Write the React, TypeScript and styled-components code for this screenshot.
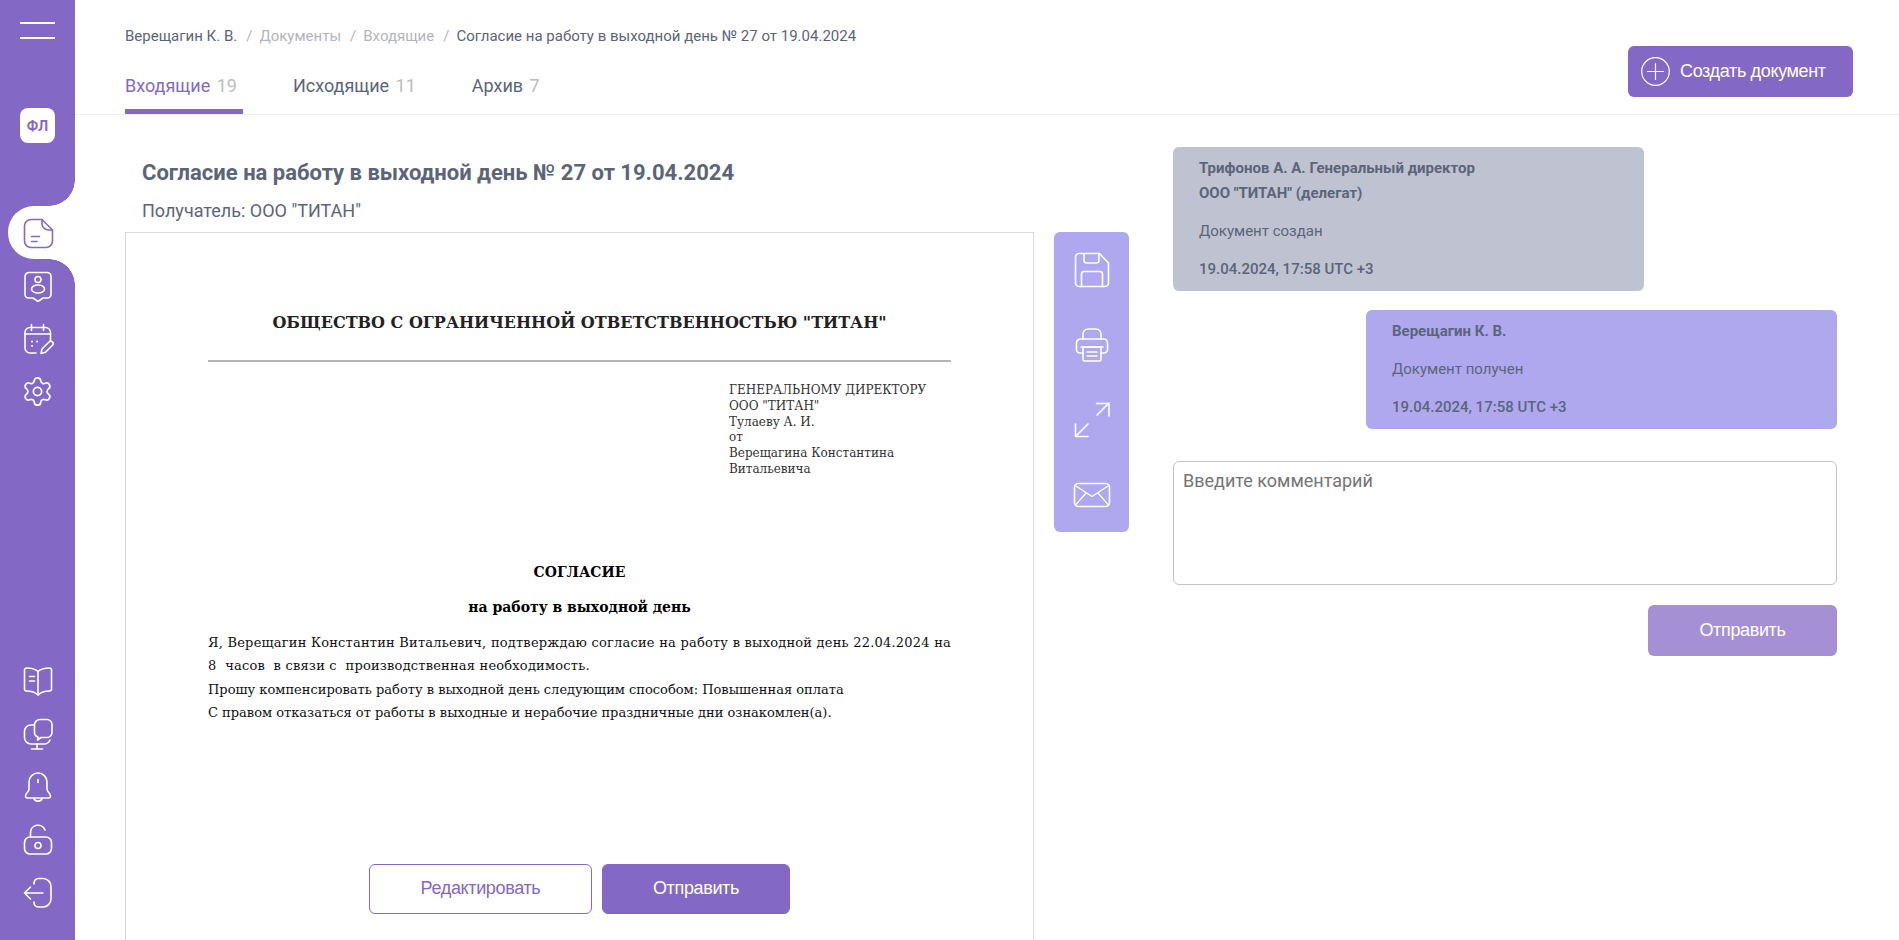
import React from "react";
import styled, { createGlobalStyle } from "styled-components";
import { Settings } from "lucide-react";

const PURPLE = "#8468c6";
const LILAC = "#b0a8ee";
const SLATE = "#5b6579";

const GlobalStyle = createGlobalStyle`
  html, body {
    margin: 0;
    padding: 0;
    height: 100%;
    background: #fff;
    overflow: hidden;
  }
  * {
    box-sizing: border-box;
  }
`;

const Glyph = ({ size = 32, color = "#fff", width = 1.6, children }: any) => (
  <svg
    width={size}
    height={size}
    viewBox={`0 0 ${size} ${size}`}
    fill="none"
    stroke={color}
    strokeWidth={width}
    strokeLinecap="round"
    strokeLinejoin="round"
  >
    {children}
  </svg>
);

const navTop = [
  {
    key: "doc",
    active: true,
    draw: (
      <Glyph color={PURPLE}>
        <path d="M20 2.5H9a6.5 6.5 0 0 0-6.5 6.5v15A6.5 6.5 0 0 0 9 30.5h15a6.5 6.5 0 0 0 6.5-6.5V13z" />
        <path d="M20 2.5v4a6.5 6.5 0 0 0 6.5 6.5h4" />
        <path d="M9.5 19.5h8M9.5 24.5h5.5" />
      </Glyph>
    ),
  },
  {
    key: "person",
    draw: (
      <Glyph>
        <path d="M7 2.5h18a4 4 0 0 1 4 4v18a3.5 3.5 0 0 1-3.5 3.5H21l-5 3.5-5-3.5H6.500A3.500 3.500 0 0 1 3 24.500v-18a4 4 0 0 1 4-4z" />
        <circle cx="16" cy="9.500" r="3" />
        <ellipse cx="16" cy="19" rx="6.500" ry="4" />
      </Glyph>
    ),
  },
  {
    key: "calendar",
    draw: (
      <Glyph>
        <path d="M14 30H8a5 5 0 0 1-5-5V9.500a5 5 0 0 1 5-5h15.500a5 5 0 0 1 5 5V18" />
        <path d="M3 11h25.500M9.500 1.500v6M21.500 1.500v6" />
        <path d="M10 18.500h.1M15 18.500h.1M10 23h.1" strokeWidth="2" />
        <path d="M19 30.500l1-4.500 7-7a2.300 2.300 0 0 1 3.500 3.200l-7 7z" />
      </Glyph>
    ),
  },
  {
    key: "settings",
    draw: <Settings size={33} color="#fff" strokeWidth={1.25} />,
  },
];

const navBottom = [
  {
    key: "book",
    draw: (
      <Glyph>
        <path d="M16 6.500C13 3.800 9 3 4.500 3A2 2 0 0 0 2.500 5v19a2 2 0 0 0 2 2c4.500 0 8.500 1 11.500 4 3-3 7-4 11.500-4a2 2 0 0 0 2-2V5a2 2 0 0 0-2-2C23 3 19 3.800 16 6.500z" />
        <path d="M16 6.500V30M7.500 11.500h5M7.500 16h5" />
      </Glyph>
    ),
  },
  {
    key: "monitor",
    draw: (
      <Glyph>
        <path d="M12 7H9a6.500 6.500 0 0 0-6.500 6.500v6A6.500 6.500 0 0 0 9 26h13a6.500 6.500 0 0 0 6-4" />
        <path d="M15 26v5M9.500 31h11" />
        <path d="M18 1.500h7a5 5 0 0 1 5 5v8a5 5 0 0 1-5 5h-6l-3.500 2.500.5-3A5 5 0 0 1 12.500 14V7A5.500 5.500 0 0 1 18 1.500z" />
      </Glyph>
    ),
  },
  {
    key: "bell",
    draw: (
      <Glyph>
        <path d="M16 2a9 9 0 0 0-9 9v7c0 3-3.500 4.500-3.500 7 0 1.200 1 2 2 2h21c1 0 2-.8 2-2 0-2.500-3.500-4-3.500-7v-7a9 9 0 0 0-9-9z" />
        <path d="M16 8.500v3M12 27.500c1 3.500 7 3.500 8 0" />
      </Glyph>
    ),
  },
  {
    key: "lock",
    draw: (
      <Glyph>
        <rect x="2.500" y="13" width="27" height="17" rx="5.500" />
        <path d="M8.500 13V8.500a7.500 7.500 0 0 1 14.500-2.500" />
        <circle cx="16" cy="21.500" r="3" />
      </Glyph>
    ),
  },
  {
    key: "exit",
    draw: (
      <Glyph>
        <path d="M12 7V6a4.500 4.500 0 0 1 4.500-4.500H21a8 8 0 0 1 8 8V22a8 8 0 0 1-8 8h-4.500A4.500 4.500 0 0 1 12 25.500V25" />
        <path d="M2.500 16H21M2.500 16l6-6M2.500 16l6 6" />
      </Glyph>
    ),
  },
];

const tools = [
  {
    key: "save",
    draw: (
      <Glyph size={38}>
        <path d="M6 2.500h20.500L35.500 12v20a3.500 3.500 0 0 1-3.500 3.500H6A3.500 3.500 0 0 1 2.500 32V6A3.500 3.500 0 0 1 6 2.500z" />
        <path d="M11 2.500v7a2.500 2.500 0 0 0 2.500 2.500h10a2.500 2.500 0 0 0 2.500-2.500v-7" />
        <path d="M8.500 35.500V23a2.500 2.500 0 0 1 2.500-2.500h16a2.500 2.500 0 0 1 2.500 2.500v12.500" />
      </Glyph>
    ),
  },
  {
    key: "print",
    draw: (
      <Glyph size={38}>
        <path d="M10 13V8a5 5 0 0 1 5-5h8a5 5 0 0 1 5 5v5" />
        <path d="M10 27H7a3.500 3.500 0 0 1-3.500-3.500V17A4 4 0 0 1 7.500 13h23a4 4 0 0 1 4 4v6.500A3.500 3.500 0 0 1 31 27h-3" />
        <rect x="10" y="21" width="18" height="14" rx="1.500" />
        <path d="M14 26h10M14 30h10M8 21h22" />
      </Glyph>
    ),
  },
  {
    key: "expand",
    draw: (
      <Glyph size={38}>
        <path d="M36 2L24 14M23.500 2.500H36V15" />
        <path d="M2.500 35.500L15 23M2.500 23v12.500H15" />
      </Glyph>
    ),
  },
  {
    key: "mail",
    draw: (
      <Glyph size={38}>
        <rect x="1.500" y="7.500" width="35" height="23" rx="4" />
        <path d="M3 10l16 10.500L35 10M3 28.500l10-11.500M35 28.500L25 17" strokeWidth="1.200" />
      </Glyph>
    ),
  },
];

export default function App() {
  return (
    <Page>
      <GlobalStyle />
      <Sidebar>
        <Burger>
          <span />
          <span />
        </Burger>
        <ProfileBadge>ФЛ</ProfileBadge>
        <NavGroup>
          {navTop.map((item) => (
            <NavItem key={item.key} $active={item.active}>
              {item.draw}
            </NavItem>
          ))}
        </NavGroup>
        <NavGroup $bottom>
          {navBottom.map((item) => (
            <NavItem key={item.key}>{item.draw}</NavItem>
          ))}
        </NavGroup>
      </Sidebar>

      <Main>
        <Header>
          <div>
            <Crumbs>
              <span>Верещагин К. В.</span>
              <Sep>/</Sep>
              <CrumbLink>Документы</CrumbLink>
              <Sep>/</Sep>
              <CrumbLink>Входящие</CrumbLink>
              <Sep>/</Sep>
              <span>Согласие на работу в выходной день № 27 от 19.04.2024</span>
            </Crumbs>
            <Tabs>
              <Tab $active>
                Входящие <Count>19</Count>
              </Tab>
              <Tab>
                Исходящие <Count>11</Count>
              </Tab>
              <Tab>
                Архив <Count>7</Count>
              </Tab>
            </Tabs>
          </div>
          <CreateButton>
            <Glyph size={29} width={1.2}>
              <circle cx="14.500" cy="14.500" r="13.800" />
              <path d="M6.500 14.500h16M14.500 6.500v16" />
            </Glyph>
            Создать документ
          </CreateButton>
        </Header>

        <Body>
          <LeftSide>
            <Title>Согласие на работу в выходной день № 27 от 19.04.2024</Title>
            <Recipient>Получатель: ООО "ТИТАН"</Recipient>
            <DocRow>
              <DocSheet>
                <DocCompany>ОБЩЕСТВО С ОГРАНИЧЕННОЙ ОТВЕТСТВЕННОСТЬЮ "ТИТАН"</DocCompany>
                <DocRule />
                <DocAddress>
                  ГЕНЕРАЛЬНОМУ ДИРЕКТОРУ
                  <br />
                  ООО "ТИТАН"
                  <br />
                  Тулаеву А. И.
                  <br />
                  от
                  <br />
                  Верещагина Константина
                  <br />
                  Витальевича
                </DocAddress>
                <DocHeading>СОГЛАСИЕ</DocHeading>
                <DocSubheading>на работу в выходной день</DocSubheading>
                <DocText>
                  Я, Верещагин Константин Витальевич, подтверждаю согласие на работу в выходной день 22.04.2024 на 8{"  "}часов{"  "}в связи с{"  "}производственная необходимость.
                </DocText>
                <DocText>Прошу компенсировать работу в выходной день следующим способом: Повышенная оплата</DocText>
                <DocText>С правом отказаться от работы в выходные и нерабочие праздничные дни ознакомлен(а).</DocText>
                <DocActions>
                  <OutlineButton>Редактировать</OutlineButton>
                  <SolidButton>Отправить</SolidButton>
                </DocActions>
              </DocSheet>
              <Toolbar>
                {tools.map((tool) => (
                  <ToolItem key={tool.key}>{tool.draw}</ToolItem>
                ))}
              </Toolbar>
            </DocRow>
          </LeftSide>

          <RightSide>
            <EventCard>
              <EventAuthor>
                Трифонов А. А. Генеральный директор
                <br />
                ООО "ТИТАН" (делегат)
              </EventAuthor>
              <EventText>Документ создан</EventText>
              <EventDate>19.04.2024, 17:58 UTC +3</EventDate>
            </EventCard>
            <EventCard $own>
              <EventAuthor>Верещагин К. В.</EventAuthor>
              <EventText>Документ получен</EventText>
              <EventDate>19.04.2024, 17:58 UTC +3</EventDate>
            </EventCard>
            <CommentBox placeholder="Введите комментарий" />
            <CommentSend>Отправить</CommentSend>
          </RightSide>
        </Body>
      </Main>
    </Page>
  );
}

const Page = styled.div`
  display: flex;
  width: 1899px;
  height: 940px;
  overflow: hidden;
  font-family: Roboto, "Liberation Sans", sans-serif;
`;

const Sidebar = styled.aside`
  flex: 0 0 75px;
  display: flex;
  flex-direction: column;
  background: ${PURPLE};
`;

const Burger = styled.div`
  display: flex;
  flex-direction: column;
  gap: 13px;
  padding: 22px 20px 0;

  span {
    height: 2px;
    background: #fff;
  }
`;

const ProfileBadge = styled.div`
  width: 35px;
  height: 35px;
  margin: 69px 0 63px 20px;
  display: flex;
  align-items: center;
  justify-content: center;
  border-radius: 8px;
  background: #fff;
  color: ${PURPLE};
  font-size: 14px;
  font-weight: 700;
`;

const NavGroup = styled.nav<{ $bottom?: boolean }>`
  display: flex;
  flex-direction: column;
  margin-top: ${(p) => (p.$bottom ? "auto" : "0")};
  padding-bottom: ${(p) => (p.$bottom ? "21px" : "0")};
`;

const NavItem = styled.div<{ $active?: boolean }>`
  position: relative;
  height: 53px;
  display: flex;
  align-items: center;
  justify-content: center;
  margin-left: ${(p) => (p.$active ? "8px" : "0")};
  padding-right: ${(p) => (p.$active ? "8px" : "0")};
  background: ${(p) => (p.$active ? "#fff" : "transparent")};
  border-radius: ${(p) => (p.$active ? "26px 0 0 26px" : "0")};

  ${(p) =>
    p.$active &&
    `
    &::before, &::after {
      content: "";
      position: absolute;
      right: 0;
      width: 26px;
      height: 26px;
    }
    &::before {
      bottom: 100%;
      background: radial-gradient(circle at 0 0, transparent 25.5px, #fff 26px);
    }
    &::after {
      top: 100%;
      background: radial-gradient(circle at 0 100%, transparent 25.5px, #fff 26px);
    }
  `}
`;

const Main = styled.main`
  flex: 1;
  min-width: 0;
  display: flex;
  flex-direction: column;
`;

const Header = styled.header`
  height: 115px;
  flex: none;
  display: flex;
  justify-content: space-between;
  align-items: flex-start;
  padding: 0 46px 0 50px;
  border-bottom: 1px solid #ededf2;
`;

const Crumbs = styled.div`
  display: flex;
  align-items: center;
  height: 20px;
  margin-top: 26px;
  font-size: 15px;
  color: ${SLATE};
  white-space: nowrap;
`;

const CrumbLink = styled.span`
  color: #b2b5bd;
`;

const Sep = styled.span`
  margin: 0 7px 0 9px;
  color: #b2b5bd;
`;

const Tabs = styled.div`
  display: flex;
  gap: 50px;
  margin-top: 15px;
`;

const Tab = styled.div<{ $active?: boolean }>`
  height: 53px;
  padding: 13px 6px 0 0;
  font-size: 18px;
  line-height: 24px;
  color: ${(p) => (p.$active ? PURPLE : SLATE)};
  border-bottom: ${(p) => (p.$active ? `5px solid ${PURPLE}` : "none")};
`;

const Count = styled.span`
  margin-left: 2px;
  color: #bbbcc2;
`;

const CreateButton = styled.button`
  display: flex;
  align-items: center;
  gap: 10px;
  width: 225px;
  height: 51px;
  margin-top: 46px;
  padding: 0 0 0 13px;
  border: none;
  border-radius: 6px;
  background: ${PURPLE};
  color: #fff;
  font-family: "Liberation Sans", Arial, sans-serif;
  font-size: 18px;
  letter-spacing: -0.35px;
`;

const Body = styled.div`
  flex: 1;
  min-height: 0;
  display: flex;
  padding-left: 50px;
`;

const LeftSide = styled.section`
  flex: 0 0 1004px;
  display: flex;
  flex-direction: column;
`;

const Title = styled.h1`
  margin: 44px 0 0 17px;
  font-size: 22px;
  line-height: 28px;
  font-weight: 700;
  color: ${SLATE};
`;

const Recipient = styled.div`
  margin: 12px 0 0 17px;
  font-size: 18px;
  line-height: 24px;
  color: ${SLATE};
`;

const DocRow = styled.div`
  display: flex;
  gap: 20px;
  align-items: flex-start;
  margin-top: 9px;
`;

const DocSheet = styled.article`
  flex: 0 0 909px;
  height: 760px;
  padding: 0 82px 0 82px;
  border: 1px solid #d9d9d9;
  font-family: "DejaVu Serif", serif;
`;

const DocCompany = styled.div`
  margin-top: 79px;
  text-align: center;
  font-size: 16px;
  line-height: 22px;
  font-weight: 700;
  color: #222;
  white-space: nowrap;
`;

const DocRule = styled.div`
  height: 2px;
  margin-top: 26px;
  background: #b3b3b3;
`;

const DocAddress = styled.div`
  margin: 21px 0 0 521px;
  font-size: 12px;
  line-height: 15.800px;
  color: #333;
  white-space: nowrap;
`;

const DocHeading = styled.div`
  margin-top: 84px;
  text-align: center;
  font-size: 14px;
  line-height: 20px;
  font-weight: 700;
  color: #000;
`;

const DocSubheading = styled(DocHeading)`
  margin-top: 15px;
`;

const DocText = styled.p`
  margin: 0;
  font-size: 13px;
  line-height: 23.500px;
  color: #111;
  text-align: justify;
  white-space: pre-wrap;

  &:first-of-type {
    margin-top: 14px;
    letter-spacing: 0.2px;
  }
`;

const DocActions = styled.div`
  display: flex;
  justify-content: center;
  gap: 10px;
  margin-top: 139px;
`;

const OutlineButton = styled.button`
  width: 223px;
  height: 50px;
  border: 1px solid ${PURPLE};
  border-radius: 6px;
  background: #fff;
  color: ${PURPLE};
  font-family: "Liberation Sans", Arial, sans-serif;
  font-size: 18px;
  letter-spacing: -0.35px;
`;

const SolidButton = styled(OutlineButton)`
  width: 188px;
  background: ${PURPLE};
  color: #fff;
`;

const Toolbar = styled.div`
  flex: 0 0 75px;
  display: flex;
  flex-direction: column;
  height: 300px;
  border-radius: 6px;
  background: ${LILAC};
`;

const ToolItem = styled.div`
  height: 75px;
  display: flex;
  align-items: center;
  justify-content: center;
`;

const RightSide = styled.section`
  flex: 0 0 664px;
  display: flex;
  flex-direction: column;
  margin-left: 44px;
  padding-top: 32px;
`;

const EventCard = styled.div<{ $own?: boolean }>`
  width: 471px;
  align-self: ${(p) => (p.$own ? "flex-end" : "flex-start")};
  margin-bottom: 19px;
  padding: 9px 26px;
  border-radius: 6px;
  background: ${(p) => (p.$own ? LILAC : "#bfc2d0")};
  font-size: 15px;
  line-height: 25px;
  color: ${SLATE};
`;

const EventAuthor = styled.div`
  font-weight: 700;
`;

const EventText = styled.div`
  margin-top: 13px;
`;

const EventDate = styled.div`
  margin-top: 13px;
  font-weight: 500;
`;

const CommentBox = styled.textarea`
  height: 124px;
  margin-top: 13px;
  padding: 7px 9px;
  border: 1px solid #c4c4c4;
  border-radius: 6px;
  outline: none;
  resize: none;
  font-family: Roboto, sans-serif;
  font-size: 18px;
  line-height: 24px;

  &::placeholder {
    color: #757575;
    opacity: 1;
  }
`;

const CommentSend = styled.button`
  align-self: flex-end;
  width: 189px;
  height: 51px;
  margin-top: 20px;
  border: none;
  border-radius: 6px;
  background: #a590d6;
  color: #fff;
  font-family: "Liberation Sans", Arial, sans-serif;
  font-size: 18px;
  letter-spacing: -0.35px;
`;
